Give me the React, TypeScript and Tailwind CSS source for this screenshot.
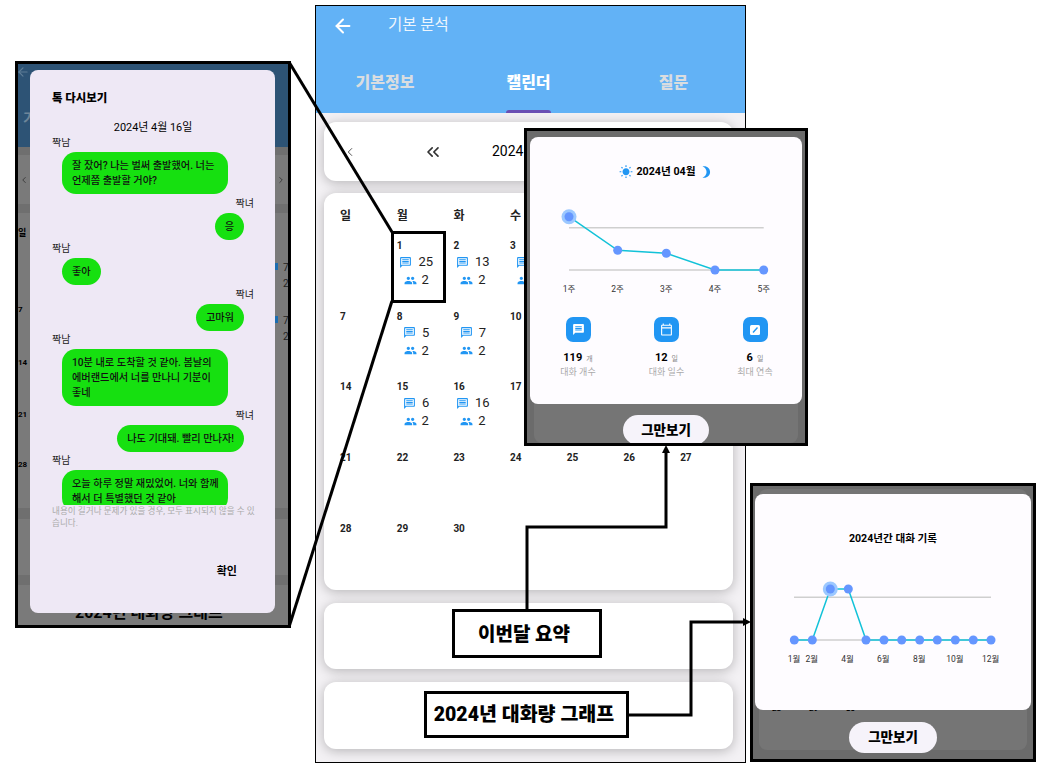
import { ArrowLeft, ChevronLeft, ChevronRight, ChevronsLeft, ChevronsRight } from 'lucide-react'
import {
    MdOutlineMessage,
    MdPeople,
    MdWbSunny,
    MdBrightness3,
    MdMessage,
    MdOutlineCalendarToday,
} from 'react-icons/md'

const FONT = "font-['Roboto','Noto_Sans_CJK_KR',sans-serif]"

const cellStats: Record<number, [number, number]> = {
    1: [25, 2],
    2: [13, 2],
    3: [7, 2],
    8: [5, 2],
    9: [7, 2],
    15: [6, 2],
    16: [16, 2],
}

const Weekdays = ['일', '월', '화', '수', '목', '금', '토']

const DayCell = ({ day }: { day: number | null }) => {
    const stats = day ? cellStats[day] : undefined
    return (
        <div className="h-[70.7px] w-[56.7px]">
            {day && (
                <p className="text-[10px] leading-[14px] font-bold text-[#222]">
                    {day}
                </p>
            )}
            {stats && (
                <div className="w-[39px] text-[13px] text-[#222] leading-[18px]">
                    <div className="flex items-center justify-center gap-[6px]">
                        <MdOutlineMessage className="w-[13px] h-[13px] text-[#2196f3]" />
                        <span>{stats[0]}</span>
                    </div>
                    <div className="flex items-center justify-center gap-[5px]">
                        <MdPeople className="w-[13px] h-[13px] text-[#2196f3]" />
                        <span>{stats[1]}</span>
                    </div>
                </div>
            )}
        </div>
    )
}

const Phone = () => {
    const days: (number | null)[] = [null, ...Array.from({ length: 30 }, (_, i) => i + 1)]
    return (
        <div className="absolute left-[315px] top-[5px] w-[431px] h-[758px] border border-black bg-[#f3f1f4] overflow-hidden">
            <div className="h-[107px] bg-[#62b2f6] relative">
                <div className="flex items-center h-[40px] pl-[16px]">
                    <ArrowLeft className="w-[22px] h-[22px] text-white" strokeWidth={2.2} />
                    <span className="ml-[34px] text-[15.5px] text-[#eef6fd]">기본 분석</span>
                </div>
                <div className="grid grid-cols-3 mt-[25px] text-center text-[16px] font-black text-[#d9dde0]">
                    <span className="pr-[5px]">기본정보</span>
                    <span className="text-white pr-[4px]">캘린더</span>
                    <span>질문</span>
                </div>
                <div className="absolute left-[190px] bottom-0 w-[45px] h-[3px] rounded-t-sm bg-[#6a4fb3]" />
            </div>
            <div className="flex flex-col px-[8px] pt-[9px]">
                <div className="h-[59px] w-[409px] rounded-xl bg-white shadow-[0_2px_12px_rgba(0,0,0,0.25)] flex items-center pl-[19px] text-[#333]">
                    <ChevronLeft className="w-[14px] h-[14px]" strokeWidth={1.4} />
                    <ChevronsLeft className="w-[20px] h-[20px] ml-[66px]" strokeWidth={2} />
                    <span className="ml-[49px] text-[14px] text-black">2024년 04월</span>
                    <ChevronsRight className="w-[20px] h-[20px] ml-[49px]" strokeWidth={2} />
                    <ChevronRight className="w-[14px] h-[14px] ml-[66px]" strokeWidth={1.4} />
                </div>
                <div className="mt-[12px] h-[397px] w-[409px] rounded-xl bg-white shadow-[0_2px_12px_rgba(0,0,0,0.25)] pl-[16px] pt-[14px] overflow-hidden">
                    <div className="grid grid-cols-[repeat(7,56.7px)] h-[32px] text-[12px] font-bold text-[#222]">
                        {Weekdays.map((d) => (
                            <span key={d}>{d}</span>
                        ))}
                    </div>
                    <div className="grid grid-cols-[repeat(7,56.7px)]">
                        {days.map((d, i) => (
                            <DayCell key={i} day={d} />
                        ))}
                    </div>
                </div>
                <div className="mt-[13px] h-[66px] w-[409px] rounded-xl bg-white shadow-[0_2px_12px_rgba(0,0,0,0.25)]" />
                <div className="mt-[13px] h-[67px] w-[409px] rounded-xl bg-white shadow-[0_2px_12px_rgba(0,0,0,0.25)]" />
            </div>
        </div>
    )
}

const Bubble = ({
    who,
    text,
    mine,
    w,
}: {
    who: string
    text: React.ReactNode
    mine?: boolean
    w?: string
}) => (
    <div className={mine ? 'flex flex-col items-end shrink-0' : 'flex flex-col items-start shrink-0'}>
        <p className="text-[10px] leading-[9px] text-[#222]">{who}</p>
        <div
            className={
                (mine ? 'mr-[10px] ' : 'ml-[10px] ') +
                (w ? 'pr-[8px] ' : 'pr-[10px] ') +
                'mt-[5px] mb-[4.5px] rounded-[14px] bg-[#16e010] pl-[10px] py-[6px] text-[10.2px] leading-[15px] font-medium text-[#111] break-keep ' +
                (w ?? '')
            }
        >
            {text}
        </div>
    </div>
)

const TalkOverlay = () => (
    <div className="absolute left-[15px] top-[61px] w-[276px] h-[567px] border-[3px] border-black bg-[#7a7a7a] overflow-hidden">
        <div className="absolute inset-x-0 top-0 h-[83px] bg-[#2d5375]" />
        <div className="absolute inset-x-0 top-[83px] h-[8px] bg-[#6f6f6f]" />
        <div className="absolute inset-x-0 top-[140px] h-[9px] bg-[#6f6f6f]" />
        <div className="absolute inset-x-0 top-[444px] h-[11px] bg-[#6f6f6f]" />
        <div className="absolute inset-x-0 top-[511px] h-[10px] bg-[#6f6f6f]" />
        <ArrowLeft className="absolute left-[-2px] top-[1px] w-[14px] h-[14px] text-[#5f7d96]" />
        <span className="absolute left-[5px] top-[44px] text-[14px] font-bold text-[#6d8599]">기</span>
        <ChevronLeft className="absolute left-[1px] top-[110px] w-[10px] h-[12px] text-[#333]" />
        <ChevronRight className="absolute left-[258px] top-[110px] w-[10px] h-[12px] text-[#333]" />
        <span className="absolute left-0 top-[163px] text-[9px] font-bold text-black">일</span>
        <span className="absolute left-0 top-[240px] text-[8px] font-bold text-black">7</span>
        <span className="absolute left-0 top-[293px] text-[8px] font-bold text-black">14</span>
        <span className="absolute left-0 top-[345px] text-[8px] font-bold text-black">21</span>
        <span className="absolute left-0 top-[395px] text-[8px] font-bold text-black">28</span>
        <span className="absolute left-[257px] top-[199px] w-[3px] h-[7px] bg-[#1c6db0]" />
        <span className="absolute left-[265px] top-[197px] text-[10px] leading-[14px] text-[#222]">7</span>
        <span className="absolute left-[265px] top-[213px] text-[10px] leading-[14px] text-[#222]">2</span>
        <span className="absolute left-[257px] top-[252px] w-[3px] h-[7px] bg-[#1c6db0]" />
        <span className="absolute left-[265px] top-[250px] text-[10px] leading-[14px] text-[#222]">7</span>
        <span className="absolute left-[265px] top-[266px] text-[10px] leading-[14px] text-[#222]">2</span>
        <span className="absolute left-[57px] top-[539px] text-[16px] leading-[20px] font-bold text-black whitespace-nowrap">
            2024년 대화량 그래프
        </span>
        <div className="absolute left-[12px] top-[6px] w-[245px] h-[543px] rounded-lg bg-[#eee8f5] pl-[22px] pr-[21px] pt-[21px] overflow-hidden">
            <p className="text-[11.4px] leading-[14px] font-black text-black">톡 다시보기</p>
            <p className="mt-[16px] text-center text-[10.9px] leading-[14px] text-black">2024년 4월 16일</p>
            <div className="mt-[3px] h-[367px] overflow-hidden flex flex-col">
                <Bubble who="짝남" text="잘 잤어? 나는 벌써 출발했어. 너는 언제쯤 출발할 거야?" w="w-[166px]" />
                <Bubble who="짝녀" text="응" mine />
                <Bubble who="짝남" text="좋아" />
                <Bubble who="짝녀" text="고마워" mine />
                <Bubble who="짝남" text="10분 내로 도착할 것 같아. 봄날의 에버랜드에서 너를 만나니 기분이 좋네" w="w-[166px]" />
                <Bubble who="짝녀" text="나도 기대돼. 빨리 만나자!" mine />
                <Bubble who="짝남" text="오늘 하루 정말 재밌었어. 너와 함께 해서 더 특별했던 것 같아" w="w-[166px]" />
            </div>
            <p className="mr-[-3px] text-[8.6px] leading-[12px] text-[#aaa] break-all">
                내용이 길거나 문제가 있을 경우, 모두 표시되지 않을 수 있습니다.
            </p>
            <p className="mt-[35px] pr-[17px] text-right text-[11px] font-bold text-black">확인</p>
        </div>
    </div>
)

const Stat = ({
    icon,
    value,
    unit,
    label,
}: {
    icon: React.ReactNode
    value: string
    unit: string
    label: string
}) => (
    <div className="flex flex-col items-center w-[60px]">
        <div className="flex h-[25px] w-[25px] items-center justify-center rounded-[7px] bg-[#2196f3] text-white">
            {icon}
        </div>
        <p className="mt-[7px] leading-[14px]">
            <span className="text-[11px] font-bold text-black">{value}</span>
            <span className="ml-[4px] text-[7px] text-[#888]">{unit}</span>
        </p>
        <p className="text-[9px] leading-[12px] text-[#aaa]">{label}</p>
    </div>
)

const MonthOverlay = () => (
    <div className="absolute left-[524px] top-[128px] w-[284px] h-[318px] border-[3px] border-black bg-[#6b6b6b] overflow-hidden">
        <div className="absolute left-[7px] right-[7px] top-[6px] h-[306px] rounded-lg bg-[#757575]" />
        <div className="absolute left-[96px] top-[284px] h-[30px] w-[86px] rounded-full bg-[#f6f3fa] flex items-center justify-center text-[13.5px] font-black text-black">
            그만보기
        </div>
        <div className="absolute left-[3px] top-[6px] w-[272px] h-[267px] rounded-lg bg-[#fefcff] flex flex-col items-center">
            <div className="mt-[28px] flex items-center text-[10.7px] font-bold text-black leading-[14px]">
                <MdWbSunny className="w-[14px] h-[14px] text-[#2196f3] mr-[3px]" />
                <span>2024년 04월</span>
                <MdBrightness3 className="w-[14px] h-[14px] text-[#2196f3] ml-[3px]" />
            </div>
            <svg width="272" height="95" viewBox="530 188 272 95" className="mt-[9px] shrink-0">
                <line x1="569" y1="227.7" x2="763.7" y2="227.7" stroke="#cfcfcf" strokeWidth="1.5" />
                <line x1="569" y1="270" x2="763.7" y2="270" stroke="#cfcfcf" strokeWidth="1.5" />
                <polyline points="569,216.7 617.7,250.3 666.3,253.3 715,270 763.7,270" fill="none" stroke="#12c2d8" strokeWidth="1.5" />
                <circle cx="569" cy="216.7" r="7.5" fill="#9cc8ff" />
                {[[569, 216.7], [617.7, 250.3], [666.3, 253.3], [715, 270], [763.7, 270]].map(([x, y]) => (
                    <circle key={x} cx={x} cy={y} r="4.5" fill="#6596ff" />
                ))}
            </svg>
            <div className="w-full grid grid-cols-[repeat(5,48.7px)] pl-[14.6px] text-center text-[8.5px] leading-[12px] text-[#333]">
                <span>1주</span>
                <span>2주</span>
                <span>3주</span>
                <span>4주</span>
                <span>5주</span>
            </div>
            <div className="mt-[22px] w-full flex pl-[18px] gap-[28.5px]">
                <Stat icon={<MdMessage className="w-[13px] h-[13px]" />} value="119" unit="개" label="대화 개수" />
                <Stat icon={<MdOutlineCalendarToday className="w-[13px] h-[13px]" />} value="12" unit="일" label="대화 일수" />
                <Stat
                    icon={
                        <svg width="12" height="12" viewBox="0 0 12 12">
                            <rect x="1" y="1" width="10" height="10" rx="1.5" fill="white" />
                            <line x1="4" y1="8.5" x2="8.5" y2="3.5" stroke="#2196f3" strokeWidth="1.4" />
                        </svg>
                    }
                    value="6"
                    unit="일"
                    label="최대 연속"
                />
            </div>
        </div>
    </div>
)

const yearPoints: [number, number][] = [
    [794.3, 640],
    [812.3, 640],
    [830.3, 589],
    [848.3, 589],
    [866, 640],
    [884, 640],
    [901.7, 640],
    [919.7, 640],
    [937.3, 640],
    [955.3, 640],
    [973.3, 640],
    [991, 640],
]

const YearOverlay = () => (
    <div className="absolute left-[750px] top-[483px] w-[286px] h-[279px] border-[3px] border-black bg-[#6b6b6b] overflow-hidden">
        <div className="absolute left-[6px] right-[6px] top-[3px] h-[261px] rounded-lg bg-[#757575]" />
        <span className="absolute left-[19px] top-[220px] text-[8px] font-bold leading-[6px] text-black">28</span>
        <span className="absolute left-[56px] top-[220px] text-[8px] font-bold leading-[6px] text-black">29</span>
        <span className="absolute left-[93px] top-[220px] text-[8px] font-bold leading-[6px] text-black">30</span>
        <div className="absolute left-[96px] top-[236px] h-[31px] w-[88px] rounded-full bg-[#f6f3fa] flex items-center justify-center text-[13.5px] font-black text-black">
            그만보기
        </div>
        <div className="absolute left-[2px] top-[8px] w-[276px] h-[216px] rounded-lg bg-[#fefcff] flex flex-col items-center">
            <p className="mt-[38px] text-[10.6px] leading-[14px] font-bold text-black">2024년간 대화 기록</p>
            <svg width="276" height="86" viewBox="755 567 276 86" className="mt-[21px] shrink-0">
                <line x1="794" y1="597.3" x2="991" y2="597.3" stroke="#cfcfcf" strokeWidth="1.5" />
                <line x1="794" y1="640" x2="991" y2="640" stroke="#cfcfcf" strokeWidth="1.5" />
                <polyline points={yearPoints.map((p) => p.join(',')).join(' ')} fill="none" stroke="#12c2d8" strokeWidth="1.5" />
                <circle cx="830.3" cy="589" r="7.5" fill="#9cc8ff" />
                {yearPoints.map(([x, y]) => (
                    <circle key={x} cx={x} cy={y} r="4.5" fill="#6596ff" />
                ))}
            </svg>
            <div className="w-full grid grid-cols-[repeat(12,17.9px)] pl-[30px] text-center text-[8.5px] leading-[12px] text-[#333] whitespace-nowrap">
                {['1월', '2월', '', '4월', '', '6월', '', '8월', '', '10월', '', '12월'].map((m, i) => (
                    <span key={i}>{m}</span>
                ))}
            </div>
        </div>
    </div>
)

const Connectors = () => (
    <svg width="1039" height="774" viewBox="0 0 1039 774" className="absolute inset-0 pointer-events-none">
        <line x1="289" y1="62" x2="392" y2="232" stroke="black" strokeWidth="3" />
        <line x1="289" y1="627" x2="392" y2="301" stroke="black" strokeWidth="3" />
        <polyline points="527,610 527,527 666,527 666,452" fill="none" stroke="black" strokeWidth="3" />
        <polygon points="666,445 662,453 670,453" fill="black" />
        <polyline points="628,715 691,715 691,622 744,622" fill="none" stroke="black" strokeWidth="3" />
        <polygon points="751,622 743,618 743,626" fill="black" />
    </svg>
)

export default function App() {
    return (
        <div className={`relative w-[1039px] h-[774px] bg-white overflow-hidden ${FONT}`}>
            <Phone />
            <Connectors />
            <div className="absolute left-[391px] top-[231px] w-[55px] h-[72px] border-[3px] border-black" />
            <TalkOverlay />
            <MonthOverlay />
            <YearOverlay />
            <div className="absolute left-[452px] top-[609px] w-[150px] h-[49px] border-[3px] border-black bg-white flex items-center justify-center pr-[6px] pt-[3px] text-[19px] font-black text-black">
                이번달 요약
            </div>
            <div className="absolute left-[424px] top-[691px] w-[205px] h-[47px] border-[3px] border-black bg-white flex items-center justify-center pr-[5px] pt-[1px] text-[19.5px] font-black text-black whitespace-nowrap">
                2024년 대화량 그래프
            </div>
        </div>
    )
}
